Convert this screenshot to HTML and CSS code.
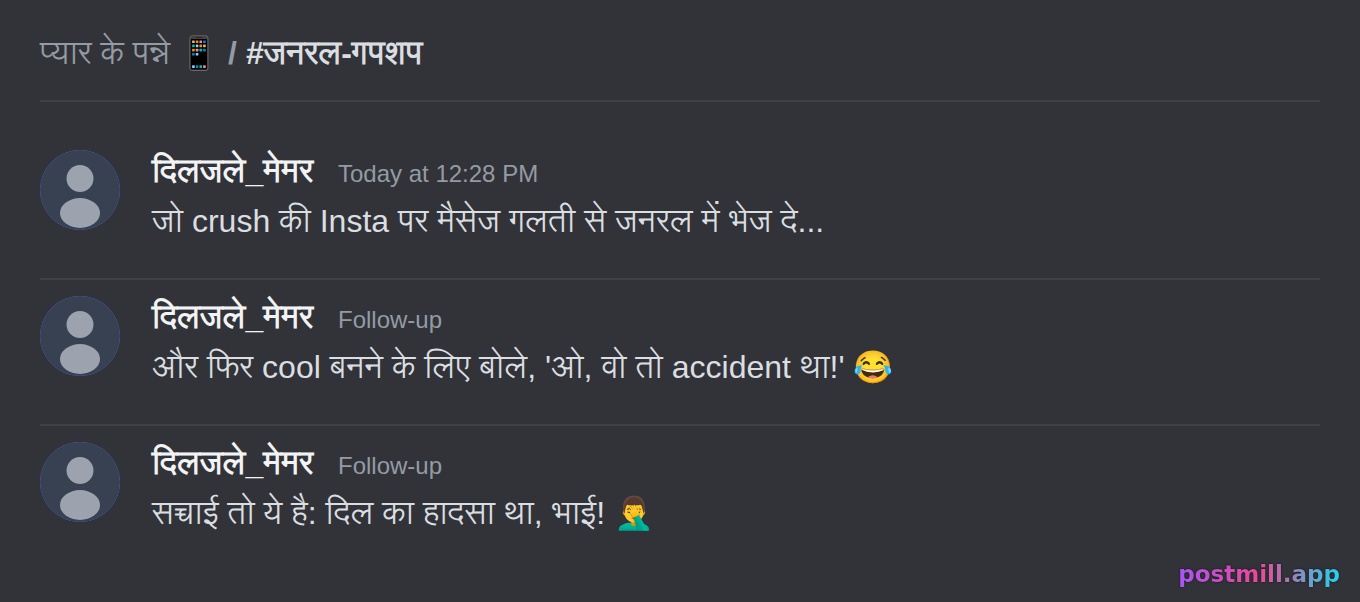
FILE: index.html
```html
<!DOCTYPE html>
<html lang="hi">
<head>
    <meta charset="UTF-8">
    <meta name="viewport" content="width=device-width, initial-scale=1.0">
    <title>#जनरल-गपशप</title>
    <link rel="stylesheet" href="styles.css">
</head>
<body>
    <svg class="defs" width="0" height="0" aria-hidden="true">
        <symbol id="avatar" viewBox="0 0 80 80">
            <circle cx="40" cy="40" r="40" fill="#374151"/>
            <circle cx="40" cy="28.5" r="13.5" fill="#9ca3af"/>
            <ellipse cx="40" cy="63" rx="20" ry="15" fill="#9ca3af"/>
        </symbol>
    </svg>
    <header class="channel">
        <span class="server">प्यार के पन्ने 📱</span>
        <span class="slash">/</span>
        <h1 class="name">#जनरल-गपशप</h1>
    </header>
    <main class="messages">
        <article class="message">
            <svg class="avatar"><use href="#avatar"/></svg>
            <div class="content">
                <div class="meta">
                    <h2 class="author">दिलजले_मेमर</h2>
                    <span class="time">Today at 12:28 PM</span>
                </div>
                <p class="text">जो crush की Insta पर मैसेज गलती से जनरल में भेज दे...</p>
            </div>
        </article>
        <article class="message">
            <svg class="avatar"><use href="#avatar"/></svg>
            <div class="content">
                <div class="meta">
                    <h2 class="author">दिलजले_मेमर</h2>
                    <span class="time">Follow-up</span>
                </div>
                <p class="text">और फिर cool बनने के लिए बोले, 'ओ, वो तो accident था!' 😂</p>
            </div>
        </article>
        <article class="message">
            <svg class="avatar"><use href="#avatar"/></svg>
            <div class="content">
                <div class="meta">
                    <h2 class="author">दिलजले_मेमर</h2>
                    <span class="time">Follow-up</span>
                </div>
                <p class="text">सच्चाई तो ये है: दिल का हादसा था, भाई! 🤦‍♂️</p>
            </div>
        </article>
    </main>
    <footer class="brand">
        <span class="logo">postmill.app</span>
    </footer>
</body>
</html>
```
FILE: styles.css
```css
* {
    box-sizing: border-box;
    margin: 0;
}
body {
    min-height: 100vh;
    display: flex;
    flex-direction: column;
    background-color: #313338;
    color: #dbdee1;
    font-family: "Liberation Sans", "Lohit Devanagari", "Noto Sans Devanagari", Arial, sans-serif;
    font-size: 32px;
}
.defs {
    position: absolute;
}
.channel {
    display: flex;
    align-items: center;
    gap: 9px;
    padding: 29px 0 23px;
    margin: 0 40px;
    border-bottom: 2px solid #3f4147;
    line-height: 48px;
}
.server,
.slash {
    color: #949ba4;
}
.slash {
    font-weight: bold;
}
.name {
    font-size: 32px;
}
.messages {
    padding: 32px 40px 0;
}
.message {
    display: flex;
    gap: 32px;
    padding: 16px 0 32px;
}
.message + .message {
    border-top: 2px solid #3f4147;
}
.message:last-child {
    padding-bottom: 16px;
}
.avatar {
    flex: none;
    width: 80px;
    height: 80px;
    border-radius: 50%;
    background-color: #5865f2;
}
.meta {
    display: flex;
    align-items: baseline;
    gap: 25px;
    margin-bottom: 4px;
}
.author {
    color: #f2f3f5;
    font-size: 32px;
    line-height: 42px;
}
.time {
    color: #949ba4;
    font-size: 24px;
    line-height: 24px;
}
.text {
    line-height: 50px;
}
.brand {
    margin-top: auto;
    padding: 0 20px 12px;
    text-align: right;
    line-height: 32px;
}
.logo {
    display: inline-block;
    background: linear-gradient(90deg, #a855f7, #ec4899, #22d3ee);
    background-clip: text;
    -webkit-background-clip: text;
    color: transparent;
    font-family: "DejaVu Sans", sans-serif;
    font-size: 23px;
    font-weight: bold;
    filter: drop-shadow(0 0 1px rgba(0, 0, 0, 0.6));
}
```
